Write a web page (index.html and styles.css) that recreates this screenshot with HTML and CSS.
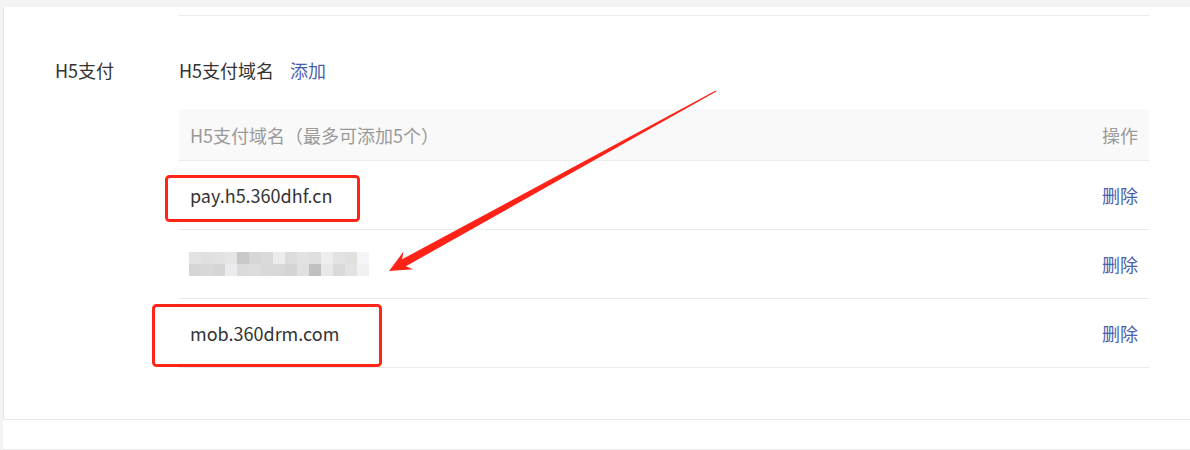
FILE: index.html
```html
<!DOCTYPE html>
<html lang="zh-CN">
<head>
<meta charset="utf-8">
<title>H5支付</title>
<link rel="stylesheet" href="styles.css">
</head>
<body>
<div class="page">
  <div class="card">
    <div class="prev-line"></div>
    <div class="section">
      <div class="label">H5支付</div>
      <div class="content">
        <div class="title"><span>H5支付域名</span><a class="link add">添加</a></div>
        <div class="table">
          <div class="thead"><span>H5支付域名（最多可添加5个）</span><span>操作</span></div>
          <div class="row"><span>pay.h5.360dhf.cn</span><a class="link">删除</a></div>
          <div class="row">
            <div class="mosaic">
              <i></i><i></i><i></i><i></i><i></i><i></i><i></i><i></i><i></i><i></i><i></i><i></i><i></i><i></i><i></i>
              <i></i><i></i><i></i><i></i><i></i><i></i><i></i><i></i><i></i><i></i><i></i><i></i><i></i><i></i><i></i>
            </div>
            <a class="link">删除</a>
          </div>
          <div class="row"><span>mob.360drm.com</span><a class="link">删除</a></div>
        </div>
      </div>
    </div>
  </div>
  <div class="footer"></div>
  <svg class="annot" width="1190" height="450" viewBox="0 0 1190 450">
    <rect x="166.5" y="176.5" width="192" height="44" rx="3" fill="none" stroke="#ff2619" stroke-width="3"/>
    <rect x="153.5" y="305.5" width="227" height="60" rx="3" fill="none" stroke="#ff2619" stroke-width="3"/>
    <polygon fill="#ff2317" points="389,271 413.1,269.2 405.8,266.3 716.3,91.6 715.7,90.4 402,259.3 403.5,251.6"/>
  </svg>
</div>
</body>
</html>
```
FILE: styles.css
```css
* { box-sizing: border-box; }
html, body { margin: 0; padding: 0; background: #fff; }
body {
  font-family: "Noto Sans CJK SC", "Liberation Sans", sans-serif;
  font-size: 18px;
  color: #333;
}
.page {
  position: relative;
  width: 1190px;
  height: 450px;
  background: #f3f3f3;
  padding-top: 7px;
  padding-left: 3px;
  overflow: hidden;
  display: flex;
  flex-direction: column;
}
.card {
  flex: 0 0 413px;
  background: #fff;
  border-left: 1px solid #e6e6e6;
  border-bottom: 1px solid #e8e8e8;
}
.prev-line {
  margin-top: 8px;
  margin-left: 175px;
  width: 970px;
  border-top: 1px solid #ebebeb;
}
.section {
  display: grid;
  grid-template-columns: 124px 970px;
  padding-left: 51px;
  padding-top: 42px;
}
.label, .title { line-height: 24px; }
.title { display: flex; margin-bottom: 27px; }
.link { color: #4861ad; text-decoration: none; }
.add { margin-left: 16px; }
.thead {
  height: 52px;
  background: #f9f9f9;
  border-bottom: 1px solid #ebebeb;
  display: flex;
  justify-content: space-between;
  align-items: center;
  padding: 0 11px;
  color: #9a9a9a;
}
.row {
  height: 69px;
  border-bottom: 1px solid #ebebeb;
  display: flex;
  justify-content: space-between;
  align-items: center;
  padding: 0 11px;
}
.mosaic {
  margin-left: -1px;
  display: grid;
  grid-template-columns: repeat(15, 12px);
  grid-auto-rows: 12px;
}
.mosaic i { display: block; }
.mosaic i:nth-child(1) { background: #e3e3e3; }
.mosaic i:nth-child(2) { background: #e0e0e0; }
.mosaic i:nth-child(3) { background: #e2e2e2; }
.mosaic i:nth-child(4) { background: #e6e5e5; }
.mosaic i:nth-child(5) { background: #c8c8c8; }
.mosaic i:nth-child(6) { background: #d6d6d6; }
.mosaic i:nth-child(7) { background: #dadada; }
.mosaic i:nth-child(8) { background: #ececec; }
.mosaic i:nth-child(9) { background: #dcdcdc; }
.mosaic i:nth-child(10) { background: #e2e2e2; }
.mosaic i:nth-child(11) { background: #dedfe0; }
.mosaic i:nth-child(12) { background: #efeeed; }
.mosaic i:nth-child(13) { background: #e3e3e3; }
.mosaic i:nth-child(14) { background: #e1e0df; }
.mosaic i:nth-child(15) { background: #f5f5f7; }
.mosaic i:nth-child(16) { background: #d6d6d6; }
.mosaic i:nth-child(17) { background: #d8d8d8; }
.mosaic i:nth-child(18) { background: #d5d5d5; }
.mosaic i:nth-child(19) { background: #ebebed; }
.mosaic i:nth-child(20) { background: #dbdbdb; }
.mosaic i:nth-child(21) { background: #dddddd; }
.mosaic i:nth-child(22) { background: #d9d9d9; }
.mosaic i:nth-child(23) { background: #d8d8d8; }
.mosaic i:nth-child(24) { background: #d4d4d4; }
.mosaic i:nth-child(25) { background: #e0e0e0; }
.mosaic i:nth-child(26) { background: #c0c0c0; }
.mosaic i:nth-child(27) { background: #e8e8e8; }
.mosaic i:nth-child(28) { background: #dadada; }
.mosaic i:nth-child(29) { background: #e2e2e2; }
.mosaic i:nth-child(30) { background: #f0f0f0; }
.footer {
  flex: 0 0 30px;
  background: #fff;
  border-bottom: 1px solid #e8e8e8;
}
.annot {
  position: absolute;
  left: 0;
  top: 0;
  pointer-events: none;
}
```
